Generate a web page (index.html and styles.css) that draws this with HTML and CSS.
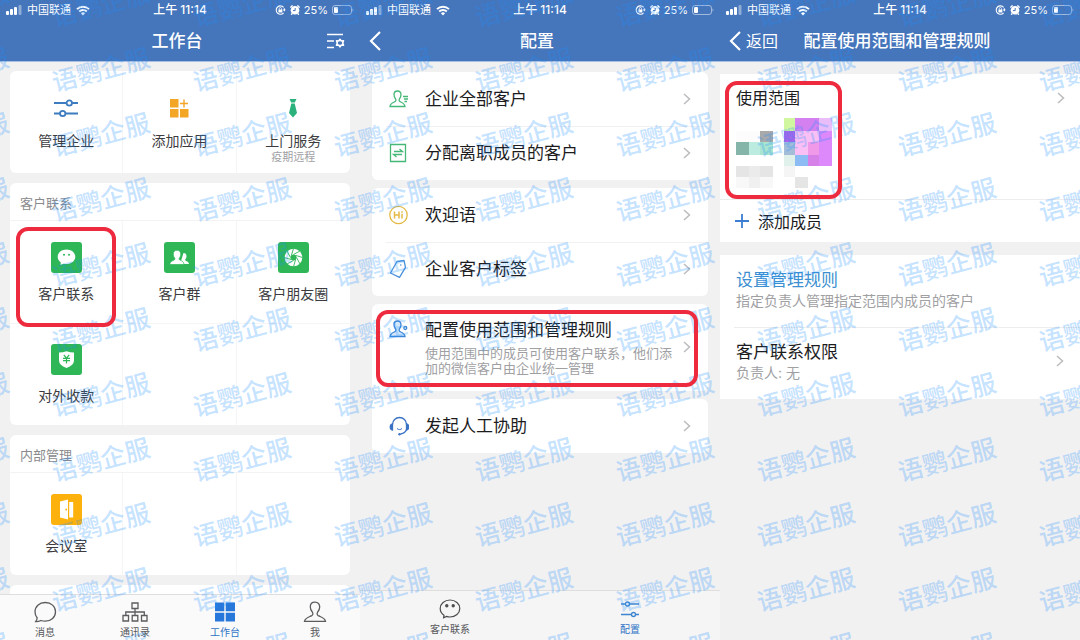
FILE: index.html
```html
<!DOCTYPE html>
<html lang="zh-CN">
<head>
  <meta charset="UTF-8">
  <meta name="viewport" content="width=device-width, initial-scale=1.0">
  <title>配置使用范围和管理规则</title>
  <link rel="stylesheet" href="styles.css">
</head>
<body>
  <svg class="sprite" aria-hidden="true">
    <symbol id="signal" viewBox="0 0 16 10">
      <rect x="0" y="6" width="3" height="4" rx="1"/>
      <rect x="4" y="4" width="3" height="6" rx="1"/>
      <rect x="8" y="2" width="3" height="8" rx="1"/>
      <rect x="12.500" y="0" width="3" height="10" rx="1" opacity=".4"/>
    </symbol>
    <symbol id="wifi" viewBox="0 0 14 11">
      <path d="M1 4.200a8.500 8.500 0 0 1 12 0M3.200 6.500a5.400 5.400 0 0 1 7.600 0" fill="none" stroke="currentColor" stroke-width="1.900"/>
      <path d="M4.900 8.200a3 3 0 0 1 4.200 0L7 10.600z"/>
    </symbol>
    <symbol id="rotation" viewBox="0 0 11 10">
      <path d="M8.600 2.300A4.200 4.200 0 1 0 8.600 7.800M9.300 3.300v2.200" fill="none" stroke="currentColor" stroke-width="1.100"/>
      <path d="M7.800 4.600h3L9.300 6.600zM3.400 4.600h4v2.800h-4z"/>
      <path d="M4.300 4.700V3.600a1.100 1.100 0 0 1 2.200 0v1.100" fill="none" stroke="currentColor" stroke-width=".8"/>
    </symbol>
    <symbol id="alarm" viewBox="0 0 10 10">
      <circle cx="5" cy="5.300" r="4.300"/>
      <path d="M.3 2.600 2.600.4M9.700 2.600 7.400.4M2.200 8.500 1.200 9.800M7.800 8.500l1 1.300" stroke="currentColor" stroke-width="1.400"/>
      <path d="M5.200 3v2.600H3" fill="none" stroke="#4575bb" stroke-width="1"/>
    </symbol>
    <symbol id="battery" viewBox="0 0 22 10">
      <rect x=".5" y=".5" width="19" height="9" rx="2.500" fill="none" stroke="currentColor" opacity=".5"/>
      <rect x="2" y="2" width="4" height="6" rx="1"/>
      <path d="M20.500 3.500c1.200.3 1.200 2.700 0 3z" opacity=".5"/>
    </symbol>
    <symbol id="back" viewBox="0 0 12 20">
      <path d="M11 1 2 10l9 9" fill="none" stroke="currentColor" stroke-width="2.200"/>
    </symbol>
    <symbol id="chevron" viewBox="0 0 8 12">
      <path d="m1 1 5.500 5L1 11" fill="none" stroke="currentColor" stroke-width="1.500"/>
    </symbol>
  </svg>

  <main class="screens">
    <section class="screen">
      <header class="topbar">
        <div class="status">
          <div class="status-left"><svg class="i-signal"><use href="#signal"/></svg><span>中国联通</span><svg class="i-wifi"><use href="#wifi"/></svg></div>
          <span class="time">上午 11:14</span>
          <div class="status-right"><svg class="i-rotation"><use href="#rotation"/></svg><svg class="i-alarm"><use href="#alarm"/></svg><span>25%</span><svg class="i-battery"><use href="#battery"/></svg></div>
        </div>
        <div class="nav">
          <span></span>
          <h1>工作台</h1>
          <button class="nav-end" aria-label="设置">
            <svg width="18" height="16" viewBox="0 0 18 16" fill="none" stroke="currentColor">
              <path d="M0 1.500h16M0 8h7M0 14.500h7" stroke-width="1.700"/>
              <path d="M13 6.300 14.300 8l2.200-.2-.8 2.200.8 2.200-2.200-.2L13 13.900 11.700 12l-2.200.2.800-2.200-.8-2.200 2.200.2z" stroke-width="1.600" stroke-linejoin="round"/>
            </svg>
          </button>
        </div>
      </header>

      <div class="content workbench">
        <div class="card app-grid">
          <button class="app">
            <span class="app-icon">
              <svg width="24" height="20" viewBox="0 0 24 20" fill="none" stroke="#3d7cc0" stroke-width="1.800">
                <path d="M0 5h12.500M18 5h6M0 15.500h6M11.500 15.500H24"/>
                <circle cx="15.300" cy="5" r="2.700"/><circle cx="8.700" cy="15.500" r="2.700"/>
              </svg>
            </span>
            <span>管理企业</span>
          </button>
          <button class="app">
            <span class="app-icon">
              <svg width="20" height="20" viewBox="0 0 20 20" fill="#f3a526">
                <path d="M1 1h8.500v8.500H1zM1 11h8.500v8.500H1zM11 11h8.500v8.500H11z"/>
                <path d="M14.300 1.500h1.400v3.300H19v1.400h-3.300v3.300h-1.400V6.200H11V4.800h3.300z"/>
              </svg>
            </span>
            <span>添加应用</span>
          </button>
          <button class="app">
            <span class="app-icon">
              <svg width="10" height="20" viewBox="0 0 10 20" fill="#2bb27c"><path d="M1.500 1h7L6.800 4.500H3.200zM3.300 5.500h3.400L9 15l-4 4.500L1 15z"/></svg>
            </span>
            <span>上门服务</span>
            <small>疫期远程</small>
          </button>
        </div>

        <div class="card">
          <h2>客户联系</h2>
          <div class="app-grid">
            <button class="app marked">
              <svg class="tile" viewBox="0 0 31 31">
                <rect width="31" height="31" rx="3" fill="#2eb657"/>
                <path d="M15.500 7.500c-4.900 0-8.800 3.200-8.800 7.300 0 2.300 1.200 4.200 3.100 5.600l-.3 2.700 3-1.400c1 .3 2 .4 3 .4 4.900 0 8.800-3.200 8.800-7.300s-3.900-7.300-8.800-7.300z" fill="#fff"/>
                <circle cx="13" cy="12.800" r="1" fill="#2eb657"/><circle cx="18" cy="12.800" r="1" fill="#2eb657"/>
              </svg>
              <span>客户联系</span>
            </button>
            <button class="app">
              <svg class="tile" viewBox="0 0 31 31">
                <rect width="31" height="31" rx="3" fill="#2eb657"/>
                <path d="M19.500 11c2 0 3 1.300 3 3.200 0 1.500-.6 2.400-1.200 3.200-.4.900.2 1.200 1 1.600 1.600.8 2.500 1.300 2.700 3H16z" fill="#fff"/>
                <path d="M13 8.300c2.500 0 3.700 1.600 3.700 3.900 0 1.800-.7 3-1.400 3.900-.6 1.100 0 1.600 1 2.100 2.300 1 3.500 1.700 3.700 4.300H5.800c.2-2.600 1.600-3.300 3.900-4.300 1-.5 1.600-1 1-2.100-.7-.9-1.400-2.100-1.400-3.900 0-2.300 1.200-3.900 3.700-3.900z" fill="#fff" stroke="#2eb657" stroke-width=".7"/>
              </svg>
              <span>客户群</span>
            </button>
            <button class="app">
              <svg class="tile" viewBox="0 0 31 31">
                <rect width="31" height="31" rx="3" fill="#2eb657"/>
                <circle cx="15.500" cy="15.500" r="8.800" fill="#fff"/>
                <circle cx="15.500" cy="15.500" r="3" fill="#2eb657"/>
                <path d="M15.500 12.500 22 9M17.600 13.400l7 2.100M18.500 15.500 22 22M17.600 17.600l-2.100 7M15.500 18.500 9 22M13.400 17.600l-7-2.100M12.500 15.500 9 9M13.400 13.400l2.100-7" stroke="#2eb657" stroke-width=".9"/>
              </svg>
              <span>客户朋友圈</span>
            </button>
            <button class="app">
              <svg class="tile" viewBox="0 0 31 31">
                <rect width="31" height="31" rx="3" fill="#2eb657"/>
                <path d="M8 8.500q4 0 7.500-1.300Q19 8.500 23 8.500v8q0 4.500-7.500 7.500Q8 21 8 16.500z" fill="#fff"/>
                <path d="m12.800 10.800 2.700 3.400 2.700-3.400M12 14.300h7M12 16.700h7M15.500 14.200v5.300" fill="none" stroke="#2eb657" stroke-width="1.200"/>
              </svg>
              <span>对外收款</span>
            </button>
            <span class="app"></span>
            <span class="app"></span>
          </div>
        </div>

        <div class="card">
          <h2>内部管理</h2>
          <div class="app-grid">
            <button class="app">
              <svg class="tile" viewBox="0 0 31 31">
                <rect width="31" height="31" rx="3" fill="#fcb10c"/>
                <path d="M9 7.500 17 5.500v20L9 23.500zM18.200 8h4v15.500h-4z" fill="#fff"/>
                <circle cx="15.200" cy="15.500" r=".9" fill="#fcb10c"/>
              </svg>
              <span>会议室</span>
            </button>
            <span class="app"></span>
            <span class="app"></span>
          </div>
        </div>

        <div class="card next-card"></div>
      </div>

      <nav class="tabs tabs-light">
        <button class="tab">
          <svg width="24" height="22" viewBox="0 0 24 22" fill="none" stroke="#5c5c60" stroke-width="1.300">
            <path d="M12.200 1.500C6.200 1.500 2 5.500 2 10.800c0 2.500.8 4.600 2.200 6.200-.2 1.400-.7 2.600-1.500 3.700 2 .1 3.700-.4 5.200-1.200 1.300.5 2.800.7 4.300.7 6 0 10.300-4 10.300-9.400s-4.300-9.300-10.300-9.300z"/>
          </svg>
          <span>消息</span>
        </button>
        <button class="tab">
          <svg width="26" height="22" viewBox="0 0 26 22" fill="none" stroke="#5c5c60" stroke-width="1.300">
            <path d="M10 2h6v5.500h-6zM1 14.500h5.500V20H1zM10.200 14.500h5.600V20h-5.600zM19.500 14.500H25V20h-5.500zM13 7.500v7M3.800 14.500V11h18.500v3.500"/>
          </svg>
          <span>通讯录</span>
        </button>
        <button class="tab active">
          <svg width="22" height="22" viewBox="0 0 22 22" fill="#2878dc">
            <path d="M1 1.500h9.300v8.800H1zM11.700 1.500H21v8.800h-9.300zM1 11.700h9.300v8.800H1zM11.700 11.700H21v8.800h-9.300z"/>
          </svg>
          <span>工作台</span>
        </button>
        <button class="tab">
          <svg width="24" height="22" viewBox="0 0 24 22" fill="none" stroke="#5c5c60" stroke-width="1.300">
            <path d="M12 1.200c-3 0-4.700 1.900-4.700 4.700 0 2.200.9 3.700 2 5.100.9 1.300.8 2.800-.6 3.600C5.500 16.200 2 17 1.500 20.300h21C22 17 18.500 16.200 15.300 14.600c-1.400-.8-1.500-2.300-.6-3.600 1.100-1.400 2-2.900 2-5.100 0-2.800-1.700-4.700-4.700-4.700z"/>
          </svg>
          <span>我</span>
        </button>
      </nav>
    </section>

    <section class="screen">
      <header class="topbar">
        <div class="status">
          <div class="status-left"><svg class="i-signal"><use href="#signal"/></svg><span>中国联通</span><svg class="i-wifi"><use href="#wifi"/></svg></div>
          <span class="time">上午 11:14</span>
          <div class="status-right"><svg class="i-rotation"><use href="#rotation"/></svg><svg class="i-alarm"><use href="#alarm"/></svg><span>25%</span><svg class="i-battery"><use href="#battery"/></svg></div>
        </div>
        <div class="nav">
          <button class="nav-back" aria-label="返回"><svg class="i-back"><use href="#back"/></svg></button>
          <h1>配置</h1>
          <span></span>
        </div>
      </header>

      <div class="content settings">
        <div class="card">
          <button class="row">
            <svg class="row-icon" viewBox="0 0 20 20" fill="none" stroke="#45b877" stroke-width="1.300">
              <path d="M8.500 2C6.200 2 5 3.500 5 5.700c0 1.800.7 3 1.500 4.200.7 1 .5 2.200-.6 2.800C3.500 13.800 1.300 14.500 1 17.500h15c-.3-3-2.500-3.700-4.900-4.800-1.100-.6-1.300-1.800-.6-2.800.8-1.200 1.500-2.400 1.500-4.200C12 3.500 10.800 2 8.500 2zM14 7.500h5M15 10h4M15.500 12.500H18"/>
            </svg>
            <span class="row-text">企业全部客户</span>
            <svg class="chevron"><use href="#chevron"/></svg>
          </button>
          <button class="row">
            <svg class="row-icon" viewBox="0 0 20 20" fill="none" stroke="#45b877" stroke-width="1.300">
              <path d="M1.500 1.500h15v17h-15zM5 8.500h8.500l-3-2.500M13 11.500H4.500l3 2.500"/>
            </svg>
            <span class="row-text">分配离职成员的客户</span>
            <svg class="chevron"><use href="#chevron"/></svg>
          </button>
        </div>

        <div class="card">
          <button class="row">
            <svg class="row-icon" viewBox="0 0 20 20" fill="none" stroke="#e5b945" stroke-width="1.300">
              <circle cx="9.500" cy="10" r="8.700"/>
              <path d="M5.500 6.500v7M10 6.500v7M5.500 10H10M13 8.800v4.700M13 6.300v1.400" stroke-width="1.500"/>
            </svg>
            <span class="row-text">欢迎语</span>
            <svg class="chevron"><use href="#chevron"/></svg>
          </button>
          <button class="row">
            <svg class="row-icon" viewBox="0 0 20 20" fill="none" stroke="#4a90d9" stroke-width="1.300">
              <path d="M8 2.500 15 1.500l1.500 6.800-6 10L1.500 14z" stroke-linejoin="round"/>
              <circle cx="11.800" cy="6" r=".8" fill="#4a90d9" stroke="none"/>
            </svg>
            <span class="row-text">企业客户标签</span>
            <svg class="chevron"><use href="#chevron"/></svg>
          </button>
        </div>

        <div class="card">
          <button class="row row-tall marked">
            <svg class="row-icon" viewBox="0 0 20 20" fill="#d5e8fb" stroke="#3f87d6" stroke-width="1.300">
              <path d="M8.500 2C6.200 2 5 3.500 5 5.700c0 1.800.7 3 1.500 4.200.7 1 .5 2.200-.6 2.800C3.500 13.800 1.300 14.500 1 17.500h15c-.3-3-2.500-3.700-4.900-4.800-1.100-.6-1.300-1.800-.6-2.800.8-1.200 1.500-2.400 1.500-4.200C12 3.500 10.800 2 8.500 2z"/>
              <circle cx="16.300" cy="9" r="1.500"/>
            </svg>
            <span class="row-text">配置使用范围和管理规则<small>使用范围中的成员可使用客户联系，他们添加的微信客户由企业统一管理</small></span>
            <svg class="chevron"><use href="#chevron"/></svg>
          </button>
        </div>

        <div class="card">
          <button class="row">
            <svg class="row-icon" viewBox="0 0 20 20" fill="none" stroke="#3a72c4" stroke-width="1.300">
              <path d="M3.500 8.500a7 7 0 0 1 14 0M17.500 13.500c-.8 2.500-3 4-6 4.500"/>
              <path d="M3.500 8c-3 .5-3 5.500 0 6zM17.500 8c3 .5 3 5.500 0 6z" fill="#3a72c4"/>
              <path d="M8 12.500c1.300 1.400 3.700 1.400 5 0" stroke-width="1"/>
              <circle cx="10.500" cy="18.200" r="1.200" fill="#3a72c4" stroke="none"/>
            </svg>
            <span class="row-text">发起人工协助</span>
            <svg class="chevron"><use href="#chevron"/></svg>
          </button>
        </div>
      </div>

      <nav class="tabs">
        <button class="tab">
          <svg width="22" height="22" viewBox="0 0 22 22" fill="none" stroke="#4c4c50" stroke-width="1.200">
            <path d="M11 2C5.500 2 1.200 5.800 1.200 10.500c0 2.700 1.500 5.100 3.800 6.700l-.4 2.600 3-1.400c1.100.4 2.200.6 3.400.6 5.500 0 9.800-3.800 9.800-8.500S16.500 2 11 2z"/>
            <circle cx="7.800" cy="7.800" r="1.100" fill="#4c4c50"/><circle cx="14.200" cy="7.800" r="1.100" fill="#4c4c50"/>
          </svg>
          <span>客户联系</span>
        </button>
        <button class="tab active">
          <svg width="20" height="22" viewBox="0 0 20 22" fill="none" stroke="#3d85d0" stroke-width="1.300">
            <path d="M1 6h4.500M9.500 6H19M1 16.500h10.500M15.500 16.500H19"/>
            <circle cx="7.500" cy="6" r="2"/><circle cx="13.500" cy="16.500" r="2"/>
          </svg>
          <span>配置</span>
        </button>
      </nav>
    </section>

    <section class="screen">
      <header class="topbar">
        <div class="status">
          <div class="status-left"><svg class="i-signal"><use href="#signal"/></svg><span>中国联通</span><svg class="i-wifi"><use href="#wifi"/></svg></div>
          <span class="time">上午 11:14</span>
          <div class="status-right"><svg class="i-rotation"><use href="#rotation"/></svg><svg class="i-alarm"><use href="#alarm"/></svg><span>25%</span><svg class="i-battery"><use href="#battery"/></svg></div>
        </div>
        <div class="nav">
          <button class="nav-back"><svg class="i-back"><use href="#back"/></svg>返回</button>
          <h1>配置使用范围和管理规则</h1>
          <span></span>
        </div>
      </header>

      <div class="content scope">
        <div class="group">
          <button class="scope-row">
            <span class="members marked">
              <span>使用范围</span>
              <svg width="96" height="70" viewBox="0 0 288 210" shape-rendering="crispEdges">
                <path d="M0 40h72v33H0z" fill="#fcfcfc"/>
                <path d="M72 40h38v33H72z" fill="#a9a9a9"/>
                <path d="M0 73h39v37H0z" fill="#85b5a9"/>
                <path d="M39 73h33v37H39z" fill="#bcebdf"/>
                <path d="M72 73h38v37H72z" fill="#a9e5cf"/>
                <path d="M0 143h39v34H0zM72 143h38v34H72z" fill="#e5e5e5"/>
                <path d="M39 143h33v34H39z" fill="#ebebeb"/>
                <path d="M0 177h39v33H0zM72 177h38v33H72z" fill="#f8f8f8"/>
                <path d="M39 177h33v33H39z" fill="#f0f0f0"/>
                <path d="M144 0h33v40h-33z" fill="#d0f7a0"/>
                <path d="M177 0h72v40h-72z" fill="#d580f0"/>
                <path d="M249 0h39v40h-39z" fill="#e9bdfa"/>
                <path d="M144 40h33v33h-33z" fill="#ab63e9"/>
                <path d="M177 40h72v33h-72zM177 73h39v37h-39z" fill="#fac0f5"/>
                <path d="M216 73h33v37h-33z" fill="#f199e9"/>
                <path d="M249 40h39v103h-39z" fill="#dd88fb"/>
                <path d="M144 73h33v37h-33z" fill="#a3bdd9"/>
                <path d="M144 110h33v33h-33z" fill="#e0f1ec"/>
                <path d="M177 110h39v33h-39z" fill="#8dbcf5"/>
                <path d="M216 110h33v33h-33z" fill="#d681e8"/>
                <path d="M144 143h33v34h-33z" fill="#f5f5f5"/>
                <path d="M177 177h39v33h-39z" fill="#e5e5e5"/>
              </svg>
            </span>
            <svg class="chevron"><use href="#chevron"/></svg>
          </button>
          <button class="add-row">
            <svg width="14" height="14" viewBox="0 0 14 14"><path d="M7 0v14M0 7h14" stroke="#3b7dd0" stroke-width="1.800"/></svg>
            添加成员
          </button>
        </div>

        <div class="group">
          <div class="rule-row">
            <span class="row-text"><a href="#">设置管理规则</a><small>指定负责人管理指定范围内成员的客户</small></span>
          </div>
          <button class="rule-row">
            <span class="row-text">客户联系权限<small>负责人: 无</small></span>
            <svg class="chevron"><use href="#chevron"/></svg>
          </button>
        </div>
      </div>
    </section>
  </main>

  <div class="watermark" aria-hidden="true"></div>

  <script>
    const watermark = document.querySelector('.watermark');
    for (let i = 0; i < 99; i++) {
      const mark = document.createElement('span');
      mark.textContent = '语鹦企服';
      watermark.appendChild(mark);
    }
  </script>
</body>
</html>
```
FILE: styles.css
```css
* {
  box-sizing: border-box;
}

body {
  position: relative;
  margin: 0;
  min-height: 100vh;
  overflow: hidden;
  background: #f1f1f1;
  color: #1c1c1e;
  font-family: Inter, "Noto Sans CJK SC", sans-serif;
  font-size: 14px;
}

button {
  margin: 0;
  padding: 0;
  border: 0;
  background: none;
  color: inherit;
  font: inherit;
  text-align: left;
  cursor: pointer;
}

h1, h2 {
  margin: 0;
}

small {
  display: block;
  color: #a0a0a3;
}

svg {
  display: block;
  flex: none;
}

.sprite {
  position: absolute;
  width: 0;
  height: 0;
}

.screens {
  display: grid;
  grid-template-columns: repeat(3, 1fr);
  height: 100vh;
}

.screen {
  display: flex;
  flex-direction: column;
  min-width: 0;
  min-height: 0;
}

/* header */
.topbar {
  background: #4575bb;
  border-bottom: 1px solid #a9c0e2;
  color: #fff;
}

.status {
  display: grid;
  grid-template-columns: 1fr auto 1fr;
  align-items: center;
  height: 20px;
  padding: 0 6px;
  font-size: 11px;
  line-height: 20px;
  fill: currentColor;
}

.status-left, .status-right {
  display: flex;
  align-items: center;
  gap: 5px;
}

.status-right {
  justify-content: flex-end;
  gap: 4px;
}

.time {
  font-size: 12px;
  font-weight: 500;
}

.i-signal { width: 16px; height: 10px; }
.i-wifi { width: 14px; height: 11px; }
.i-rotation { width: 11px; height: 10px; }
.i-alarm { width: 10px; height: 10px; }
.i-battery { width: 22px; height: 10px; }
.i-back { width: 12px; height: 20px; }

.nav {
  display: grid;
  grid-template-columns: 1fr auto 1fr;
  align-items: center;
  height: 41px;
  padding: 0 15px 0 9px;
}

.nav h1 {
  font-size: 17px;
  font-weight: 500;
  line-height: 24px;
}

.nav-back {
  display: flex;
  align-items: center;
  gap: 5px;
  font-size: 16px;
  line-height: 24px;
}

.nav-end {
  justify-self: end;
}

.content {
  display: flex;
  flex: 1;
  flex-direction: column;
  min-height: 0;
  overflow: hidden;
}

.card {
  flex: none;
  border-radius: 6px;
  background: #fff;
}

.chevron {
  width: 8px;
  height: 12px;
  color: #bcbcc0;
}

/* workbench */
.workbench {
  gap: 10px;
  padding: 9px 10px 0;
}

.card h2 {
  padding: 0 10px;
  border-bottom: 1px solid #f3f3f3;
  color: #8a8a8d;
  font-size: 13px;
  font-weight: 400;
  line-height: 40px;
  height: 38px;
}

.app-grid {
  display: grid;
  grid-template-columns: repeat(3, 1fr);
}

.app {
  position: relative;
  display: flex;
  flex-direction: column;
  align-items: center;
  height: 102px;
  padding-top: 21px;
  border-right: 1px solid #f5f5f5;
  color: #3c3c40;
  font-size: 14px;
  line-height: 20px;
}

.app:nth-child(3n) {
  border-right: 0;
}

.app:nth-child(n+4) {
  padding-top: 20px;
  border-top: 1px solid #f5f5f5;
}

.tile {
  width: 31px;
  height: 31px;
  margin-bottom: 11px;
}

.app-icon {
  display: flex;
  align-items: center;
  height: 31px;
  margin-bottom: 8px;
}

.app small {
  margin-top: -2px;
  font-size: 11px;
  line-height: 16px;
}

.next-card {
  height: 40px;
}

/* red outline around the item being explained */
.marked {
  position: relative;
}

.marked::after {
  content: "";
  position: absolute;
  z-index: 2;
  inset: 6px 6px -4px;
  border: 4px solid #ee2a3e;
  border-radius: 12px;
}

.row.marked::after {
  inset: 6px 10px 4px 4px;
}

.members.marked::after {
  inset: -6px -10px -11px -11px;
}

/* settings list */
.settings {
  gap: 8px;
  padding: 10px 12px 0;
}

.row {
  display: flex;
  align-items: center;
  width: 100%;
  min-height: 54px;
  padding: 0 17px;
}

.row + .row {
  background: linear-gradient(#f1f1f1, #f1f1f1) 14px 0 / 100% 1px no-repeat;
}

.row-icon {
  width: 20px;
  height: 20px;
  margin-right: 16px;
}

.row-text {
  flex: 1;
  font-size: 17px;
  line-height: 24px;
}

.row-text small {
  font-size: 13px;
  line-height: 15px;
}

.row-tall {
  min-height: 87px;
  padding-bottom: 2px;
}

.row-tall .row-icon {
  align-self: flex-start;
  margin-top: 15px;
}

.row-tall .row-text small {
  margin-top: 4px;
}

/* bottom tabs */
.tabs {
  display: grid;
  grid-auto-columns: 1fr;
  grid-auto-flow: column;
  height: 50px;
  padding-top: 7px;
  border-top: 1px solid #dedede;
  background: #f5f5f5;
}

.tabs-light {
  height: 46px;
  padding-top: 6px;
  background: #fafafa;
}

.tab {
  display: flex;
  flex-direction: column;
  align-items: center;
  gap: 2px;
  color: #58585c;
  font-size: 10px;
  line-height: 14px;
}

.tab.active {
  color: #2f74c6;
}

/* scope and rules */
.scope {
  gap: 13px;
  padding-top: 12px;
}

.group {
  background: #fff;
}

.scope-row {
  display: flex;
  justify-content: space-between;
  width: 100%;
  height: 125px;
  padding: 13px 15px 0 16px;
}

.scope-row .chevron {
  margin-top: 5px;
}

.members {
  display: flex;
  flex-direction: column;
  gap: 8px;
  width: 96px;
  height: 101px;
  font-size: 16px;
  line-height: 23px;
}

.add-row {
  display: flex;
  align-items: center;
  gap: 9px;
  width: 100%;
  height: 43px;
  padding: 0 15px;
  border-top: 1px solid #ededed;
  font-size: 16px;
}

.rule-row {
  display: flex;
  align-items: center;
  width: 100%;
  height: 72px;
  padding: 0 16px 4px;
}

.rule-row + .rule-row {
  background: linear-gradient(#ededed, #ededed) 14px 0 / 100% 1px no-repeat;
}

.rule-row a {
  color: #3c8fd0;
  text-decoration: none;
}

.rule-row small {
  font-size: 14px;
  line-height: 18px;
}

/* watermark over all three screens */
.watermark {
  position: absolute;
  z-index: 1;
  top: -28px;
  left: -110px;
  display: grid;
  grid-template-columns: repeat(9, 141px);
  grid-auto-rows: 65px;
  place-items: center;
  color: rgba(30, 144, 255, 0.27);
  font-size: 25px;
  font-weight: 500;
  line-height: 30px;
  pointer-events: none;
}

.watermark span {
  transform: rotate(-15deg);
}
```
